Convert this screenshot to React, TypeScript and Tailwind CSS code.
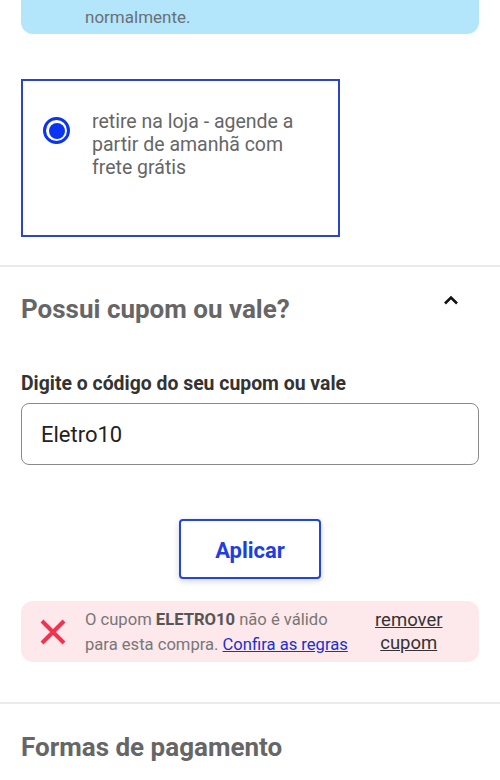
import React from 'react';

const App: React.FC = () => {
  return (
    <div className="w-[500px] h-[780px] overflow-hidden bg-white font-['Roboto',sans-serif]">
      {/* info box, top cut off */}
      <div className="mx-[21px] rounded-b-[12px] bg-[#b3e5fb] pl-[64px] pt-[6px] pb-[6px] text-[17px] leading-[22px] text-[#6b7074]">
        normalmente.
      </div>

      {/* pickup option */}
      <div className="mt-[45px] ml-[21px] w-[319px] h-[158px] border-2 border-[#2c43cc] flex items-start pt-[29px]">
        <div className="ml-[20px] mt-[7px] w-[27px] h-[27px] shrink-0 rounded-full border-[3px] border-[#0a34f2] flex items-center justify-center">
          <div className="w-[16px] h-[16px] rounded-full bg-[#0a34f2]" />
        </div>
        <p className="ml-[22px] text-[19.5px] leading-[23px] text-[#666666]">
          retire na loja - agende a<br />partir de amanhã com<br />frete grátis
        </p>
      </div>

      <div className="mt-[28px] h-[2px] bg-[#ebebeb]" />

      {/* coupon section */}
      <div className="px-[21px]">
        <div className="mt-[27px] flex items-start justify-between">
          <h2 className="text-[26px] leading-[30px] font-bold text-[#666666]">Possui cupom ou vale?</h2>
          <svg className="mt-[1px] mr-[20px]" width="16" height="10" viewBox="0 0 16 10" fill="none">
            <path d="M2 8.5 L8 2.5 L14 8.5" stroke="#111" strokeWidth="2.6" />
          </svg>
        </div>

        <label className="block mt-[48px] text-[19.4px] leading-[24px] font-bold text-[#333333]">
          Digite o código do seu cupom ou vale
        </label>
        <div className="mt-[7px] h-[62px] rounded-[8px] border border-[#8a8a8a] flex items-center pl-[19px] text-[22px] text-[#222222]">
          Eletro10
        </div>

        <div className="mt-[54px] flex justify-center">
          <button className="w-[142px] h-[60px] rounded-[4px] border-2 border-[#2244e0] bg-white shadow-[0_2px_6px_rgba(0,0,0,0.18)] pt-[3px] text-[22px] font-bold text-[#1d3fe0]">
            Aplicar
          </button>
        </div>

        <div className="mt-[22px] h-[61px] rounded-[12px] bg-[#fde8eb] flex items-center">
          <div className="w-[64px] flex justify-center">
            <svg width="28" height="28" viewBox="0 0 28 28" fill="none">
              <path d="M3 3 L25 25 M25 3 L3 25" stroke="#f2334f" strokeWidth="4" />
            </svg>
          </div>
          <div className="w-[272px] text-[16.6px] leading-[25px] text-[#777777] pt-[1px]">
            <div>
              O cupom <span className="font-bold text-[#555555]">ELETRO10</span> não é válido
            </div>
            <div>
              para esta compra. <a href="#" className="text-[#1a2fd0] underline">Confira as regras</a>
            </div>
          </div>
          <div className="ml-[18px] text-center text-[18.5px] leading-[23px] text-[#333333] underline">
            <div>remover</div>
            <div>cupom</div>
          </div>
        </div>
      </div>

      <div className="mt-[40px] h-[2px] bg-[#ebebeb]" />

      <h2 className="mt-[28px] px-[21px] text-[26px] leading-[30px] font-bold text-[#666666]">Formas de pagamento</h2>
    </div>
  );
};

export default App;
